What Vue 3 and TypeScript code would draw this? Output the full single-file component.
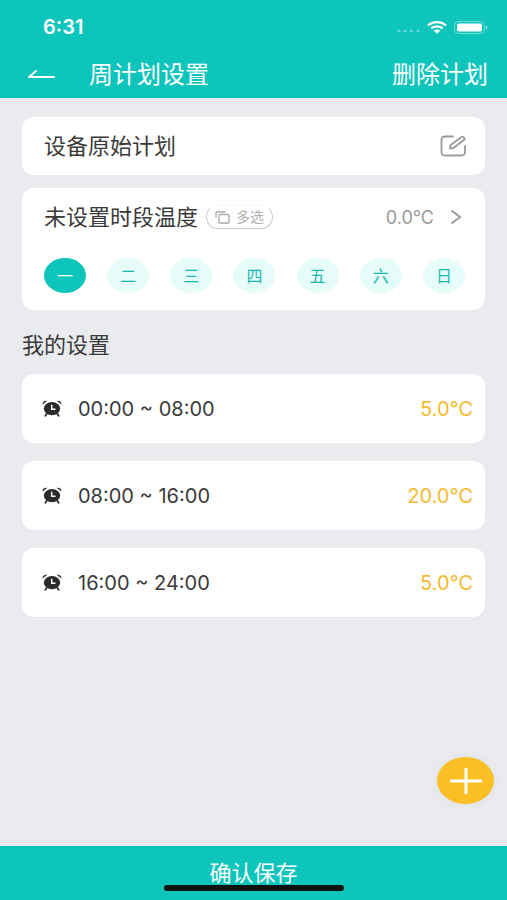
<script setup lang="ts">
import { ref } from 'vue'

interface Period {
  range: string
  temp: string
}

const days: string[] = ['一', '二', '三', '四', '五', '六', '日']
const activeDay = ref<number>(0)

const periods: Period[] = [
  { range: '00:00 ~ 08:00', temp: '5.0℃' },
  { range: '08:00 ~ 16:00', temp: '20.0℃' },
  { range: '16:00 ~ 24:00', temp: '5.0℃' },
]
</script>

<template>
  <div class="page">
    <header class="top">
      <div class="status">
        <span class="clock">6:31</span>
        <div class="signals">
          <svg width="23" height="4" viewBox="0 0 23 4" aria-hidden="true">
            <g fill="#fff" opacity="0.35">
              <circle cx="2" cy="2" r="1.6" /><circle cx="8" cy="2" r="1.6" />
              <circle cx="14.500" cy="2" r="1.6" /><circle cx="21" cy="2" r="1.6" />
            </g>
          </svg>
          <svg class="wifi" width="20" height="13" viewBox="0 0 20 13" aria-hidden="true">
            <g fill="none" stroke="#fff" stroke-width="2.4">
              <path d="M1 4.300C6 .1 14 .1 19 4.300" />
              <path d="M4.300 7.400c3.300-2.700 8.100-2.700 11.400 0" />
            </g>
            <path d="M6.700 9.600c2-1.600 4.600-1.600 6.600 0L10 12.800z" fill="#fff" />
          </svg>
          <svg width="34" height="13" viewBox="0 0 34 13" aria-hidden="true">
            <rect x=".5" y=".5" width="30" height="12" rx="4" fill="none" stroke="#fff" stroke-opacity=".4" />
            <rect x="3" y="2.500" width="25" height="8" rx="1.800" fill="#fff" />
            <path d="M32 4.500c2 .7 2 3.300 0 4z" fill="#fff" opacity=".5" />
          </svg>
        </div>
      </div>
      <nav class="bar">
        <button class="plain back" type="button" aria-label="返回">
          <svg width="28" height="12" viewBox="0 0 28 12" fill="none" stroke="#fff" stroke-width="2" stroke-linecap="round" stroke-linejoin="round">
            <path d="M9 2 2 8H27" />
          </svg>
        </button>
        <h1>周计划设置</h1>
        <button class="plain remove" type="button">删除计划</button>
      </nav>
    </header>

    <main class="content">
      <section class="card plan">
        <h2>设备原始计划</h2>
        <button class="plain" type="button" aria-label="编辑">
          <svg width="26" height="22" viewBox="0 0 26 22" fill="none" stroke="#9b9b9b" stroke-width="1.800" stroke-linecap="round" stroke-linejoin="round">
            <path d="M13 1.500H5Q1.500 1.500 1.500 5v12q0 3.500 3.500 3.500h16q4 0 4-3.500v-6" />
            <path d="M10 13.500 10.600 10 21.500 2q1-.7 2 .2l.8.8q.8 1-.2 1.800L13.500 13z" />
          </svg>
        </button>
      </section>

      <section class="card unset">
        <div class="unset-head">
          <h2>未设置时段温度</h2>
          <button class="multi" type="button">
            <svg width="15" height="13" viewBox="0 0 15 13" fill="none" stroke="#aaa" stroke-width="1.300">
              <rect x="4" y="3.500" width="10" height="8.500" rx="1" />
              <path d="M1 7V2q0-1 1-1h7.500v1" />
            </svg>
            多选
          </button>
          <button class="plain value" type="button">
            0.0℃
            <svg width="12" height="16" viewBox="0 0 12 16" fill="none" stroke="#999" stroke-width="2">
              <path d="m1.500 1.500 8.500 6.500-8.500 6.500" />
            </svg>
          </button>
        </div>
        <div class="days">
          <button
            v-for="(day, i) in days"
            :key="day"
            class="day"
            :class="{ active: activeDay === i }"
            type="button"
            :aria-pressed="activeDay === i"
            @click="activeDay = i"
          >{{ day }}</button>
        </div>
      </section>

      <h2 class="section-title">我的设置</h2>

      <ul class="periods">
        <li v-for="p in periods" :key="p.range" class="card period">
          <svg width="20" height="17" viewBox="0 0 20 17" aria-hidden="true">
            <ellipse cx="10" cy="8.600" rx="8.200" ry="6.600" fill="#2b2b2b" />
            <path d="M.6 4.600C.4 2 2.400.4 5.400.8zM19.400 4.600C19.600 2 17.600.4 14.600.8z" fill="#2b2b2b" />
            <path d="M4.500 14 3.400 15.800M15.500 14l1.100 1.800" fill="none" stroke="#2b2b2b" stroke-width="1.800" stroke-linecap="round" />
            <path d="M9.700 4.800v4.400h3.800" fill="none" stroke="#fff" stroke-width="1.500" />
          </svg>
          <span class="range">{{ p.range }}</span>
          <span class="temp">{{ p.temp }}</span>
        </li>
      </ul>
    </main>

    <footer class="footer">
      <button class="fab" type="button" aria-label="添加">
        <svg width="32" height="26" viewBox="0 0 32 26" fill="none" stroke="#fff" stroke-width="3">
          <path d="M0 13h32M16 0v26" />
        </svg>
      </button>
      <button class="save" type="button">确认保存</button>
      <div class="home"></div>
    </footer>
  </div>
</template>

<style>
body {
  background: #e9ebef;
}
</style>

<style scoped>
.page {
  display: flex;
  flex-direction: column;
  min-height: 100vh;
  color: #3a3a3a;
  font-family: Inter, "Noto Sans CJK SC", sans-serif;
}
* {
  box-sizing: border-box;
}
button {
  font-family: inherit;
  cursor: pointer;
}
h1,
h2 {
  margin: 0;
  font-weight: 400;
}
.plain {
  display: flex;
  align-items: center;
  padding: 0;
  border: 0;
  background: none;
  color: inherit;
}
.top {
  height: 98px;
  padding-top: 15px;
  background: #0ec5bb;
  color: #fff;
}
.status {
  display: flex;
  align-items: center;
  justify-content: space-between;
  height: 24px;
  padding: 0 19px 0 43px;
}
.clock {
  font-size: 20px;
  font-weight: 600;
  line-height: 24px;
}
.signals {
  display: flex;
  align-items: center;
  gap: 7px;
}
.signals svg:first-child {
  margin-top: 8px;
}
.bar {
  display: flex;
  align-items: center;
  height: 48px;
  margin-top: 12px;
  padding: 0 19px 0 27px;
}
.back {
  width: 62px;
}
.bar h1,
.remove {
  font-size: 24px;
  font-weight: 400;
  line-height: 32px;
}
.bar h1 {
  flex: 1;
}
.content {
  flex: 1;
  padding: 19px 22px 24px;
}
.card {
  border-radius: 12px;
  background: #fff;
}
.card h2,
.section-title {
  font-size: 22px;
  line-height: 32px;
}
.plan {
  display: flex;
  align-items: center;
  justify-content: space-between;
  height: 58px;
  padding: 0 19px 0 22px;
}
.unset {
  height: 122px;
  margin-top: 13px;
  padding: 13px 20px 18px 22px;
}
.unset-head {
  display: flex;
  align-items: center;
  height: 32px;
}
.multi {
  display: flex;
  align-items: center;
  gap: 6px;
  height: 24px;
  margin-left: 8px;
  padding: 0 8px;
  border: 1px solid #ccc;
  border-top-color: #f6f6f6;
  border-radius: 12px;
  background: #fff;
  color: #b0b0b0;
  font-size: 14px;
  line-height: 20px;
}
.value {
  gap: 16px;
  margin-left: auto;
  padding-right: 3px;
  color: #999;
  font-size: 18px;
}
.days {
  display: flex;
  justify-content: space-between;
  margin-top: 25px;
}
.day {
  width: 42px;
  height: 35px;
  padding: 0;
  border: 0;
  border-radius: 50%;
  background: #e6fcf9;
  color: #16b8ae;
  font-size: 16px;
  line-height: 36px;
}
.day.active {
  background: #0ec5bb;
  color: #fff;
}
.section-title {
  margin: 19px 0 13px;
}
.periods {
  display: flex;
  flex-direction: column;
  gap: 18px;
  margin: 0;
  padding: 0;
  list-style: none;
}
.period {
  display: flex;
  align-items: center;
  height: 69px;
  padding: 0 12px 0 20px;
  font-size: 20px;
}
.range {
  margin-left: 16px;
}
.temp {
  margin-left: auto;
  color: #f5ba31;
}
.footer {
  position: relative;
  display: flex;
  flex-direction: column;
  align-items: center;
  height: 54px;
  background: #0ec5bb;
}
.save {
  width: 100%;
  height: 54px;
  padding: 0;
  border: 0;
  background: none;
  color: #fff;
  font-size: 22px;
  line-height: 54px;
}
.home {
  position: absolute;
  bottom: 9px;
  width: 180px;
  height: 6px;
  border-radius: 3px;
  background: #111;
}
.fab {
  position: absolute;
  right: 13px;
  bottom: 96px;
  display: flex;
  align-items: center;
  justify-content: center;
  width: 57px;
  height: 47px;
  padding: 0;
  border: 0;
  border-radius: 50%;
  background: #f9bf24;
  box-shadow: 0 0 12px rgb(0 0 0 / 5%);
}
</style>
